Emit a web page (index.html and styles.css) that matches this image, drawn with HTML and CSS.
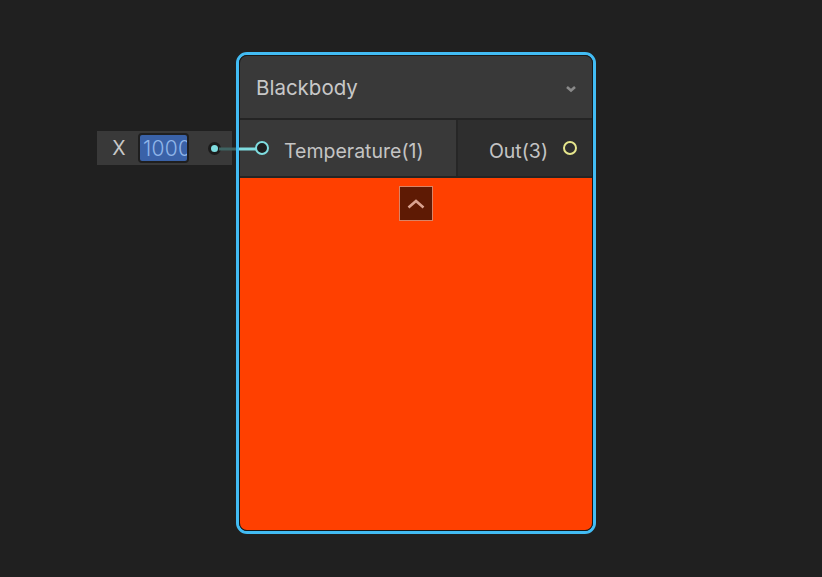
FILE: index.html
```html
<!DOCTYPE html>
<html lang="en">
<head>
    <meta charset="UTF-8">
    <meta name="viewport" content="width=device-width, initial-scale=1.0">
    <link rel="stylesheet" href="styles.css">
    <title>Shader Graph</title>
</head>
<body>
    <div class="graph">
        <div class="inline-field">
            <span class="field-label">X</span>
            <div class="field-input"><span class="field-value">1000</span></div>
            <span class="field-dot"></span>
        </div>

        <div class="node">
            <div class="node-inner">
                <div class="node-title">
                    <span>Blackbody</span>
                    <svg class="title-chevron" width="14" height="8" viewBox="0 0 14 8">
                        <path d="M3 2 L7 5.5 L11 2" fill="none" stroke="#8a8a8a" stroke-width="2.6"/>
                    </svg>
                </div>
                <div class="ports">
                    <div class="port-in">
                        <span class="port-ring in-ring"></span>
                        <span class="port-name">Temperature(1)</span>
                    </div>
                    <div class="port-out">
                        <span class="port-name">Out(3)</span>
                        <span class="port-ring out-ring"></span>
                    </div>
                </div>
                <div class="preview">
                    <div class="collapse-btn">
                        <svg width="20" height="12" viewBox="0 0 20 12">
                            <path d="M2.5 9.5 L10 3 L17.5 9.5" fill="none" stroke="#d9a290" stroke-width="2.6"/>
                        </svg>
                    </div>
                </div>
            </div>
        </div>

        <svg class="edge" width="40" height="10" viewBox="0 0 40 10">
            <line x1="0" y1="5" x2="17" y2="5" stroke="#3f6463" stroke-width="3"/>
            <line x1="17" y1="5" x2="20" y2="5" stroke="#42bcf4" stroke-width="3"/>
            <line x1="20" y1="5" x2="37" y2="5" stroke="#7fdde0" stroke-width="3"/>
        </svg>
    </div>
</body>
</html>
```
FILE: styles.css
```css
body {
    margin: 0;
    background-color: #202020;
    font-family: 'Inter', 'Noto Sans', sans-serif;
    color: #c4c4c4;
}

.graph {
    position: relative;
    width: 822px;
    height: 577px;
    overflow: hidden;
}

/* inline value field attached to the input port */
.inline-field {
    position: absolute;
    left: 97px;
    top: 131px;
    width: 135px;
    height: 34px;
    background-color: #393939;
    display: flex;
    align-items: center;
    box-sizing: border-box;
}

.field-label {
    width: 44px;
    text-align: center;
    font-size: 19.5px;
    color: #c8c8c8;
}

.field-input {
    width: 51px;
    height: 30px;
    margin-left: -3px;
    box-sizing: border-box;
    border: 2px solid #1f1f1f;
    border-radius: 4px;
    background-color: #3a62a8;
    overflow: hidden;
}

.field-value {
    display: block;
    height: 100%;
    line-height: 27px;
    padding-left: 3px;
    color: #90b6ea;
    font-size: 21px;
    font-weight: 300;
    letter-spacing: 0.3px;
    white-space: nowrap;
}

.field-dot {
    margin-left: 19px;
    width: 13px;
    height: 13px;
    border-radius: 50%;
    background-color: #1c1c1c;
    display: flex;
    align-items: center;
    justify-content: center;
}

.field-dot::after {
    content: '';
    width: 7px;
    height: 7px;
    border-radius: 50%;
    background-color: #7fdde0;
}

.edge {
    position: absolute;
    left: 219px;
    top: 144px;
}

/* node */
.node {
    position: absolute;
    left: 236px;
    top: 52px;
    width: 360px;
    height: 482px;
    box-sizing: border-box;
    border: 3px solid #42bcf4;
    border-radius: 11px;
}

.node-inner {
    height: 100%;
    box-sizing: border-box;
    border: 1px solid #191919;
    border-radius: 8px;
    overflow: hidden;
    display: flex;
    flex-direction: column;
    background-color: #232323;
}

.node-title {
    height: 62px;
    flex-shrink: 0;
    background-color: #393939;
    border-bottom: 2px solid #242424;
    display: flex;
    align-items: center;
    justify-content: space-between;
    padding: 0 14px 0 16px;
    font-size: 20.5px;
    color: #c8c8c8;
}

.title-chevron {
    margin-top: 3px;
}

.ports {
    height: 56px;
    flex-shrink: 0;
    display: flex;
    border-bottom: 2px solid #242424;
}

.port-in {
    width: 218px;
    box-sizing: border-box;
    background-color: #393939;
    border-right: 2px solid #262626;
    display: flex;
    align-items: center;
    padding-left: 15px;
    gap: 15px;
    font-size: 19.5px;
}

.port-out {
    flex: 1;
    background-color: #2e2e2e;
    display: flex;
    align-items: center;
    justify-content: flex-end;
    padding-right: 15px;
    gap: 15px;
    font-size: 19.5px;
}

.port-name {
    margin-top: 6px;
}

.port-ring {
    width: 14px;
    height: 14px;
    box-sizing: border-box;
    border-radius: 50%;
    border: 2px solid;
    background-color: #1e1e1e;
}

.in-ring {
    border-color: #7fdde0;
}

.out-ring {
    border-color: #e6e68c;
    background-color: transparent;
}

.preview {
    flex: 1;
    background-color: #ff4000;
    display: flex;
    justify-content: center;
    padding-top: 8px;
}

.collapse-btn {
    width: 34px;
    height: 35px;
    box-sizing: border-box;
    border: 1px solid #d98466;
    background-color: #5e1a04;
    display: flex;
    align-items: center;
    justify-content: center;
}
```
